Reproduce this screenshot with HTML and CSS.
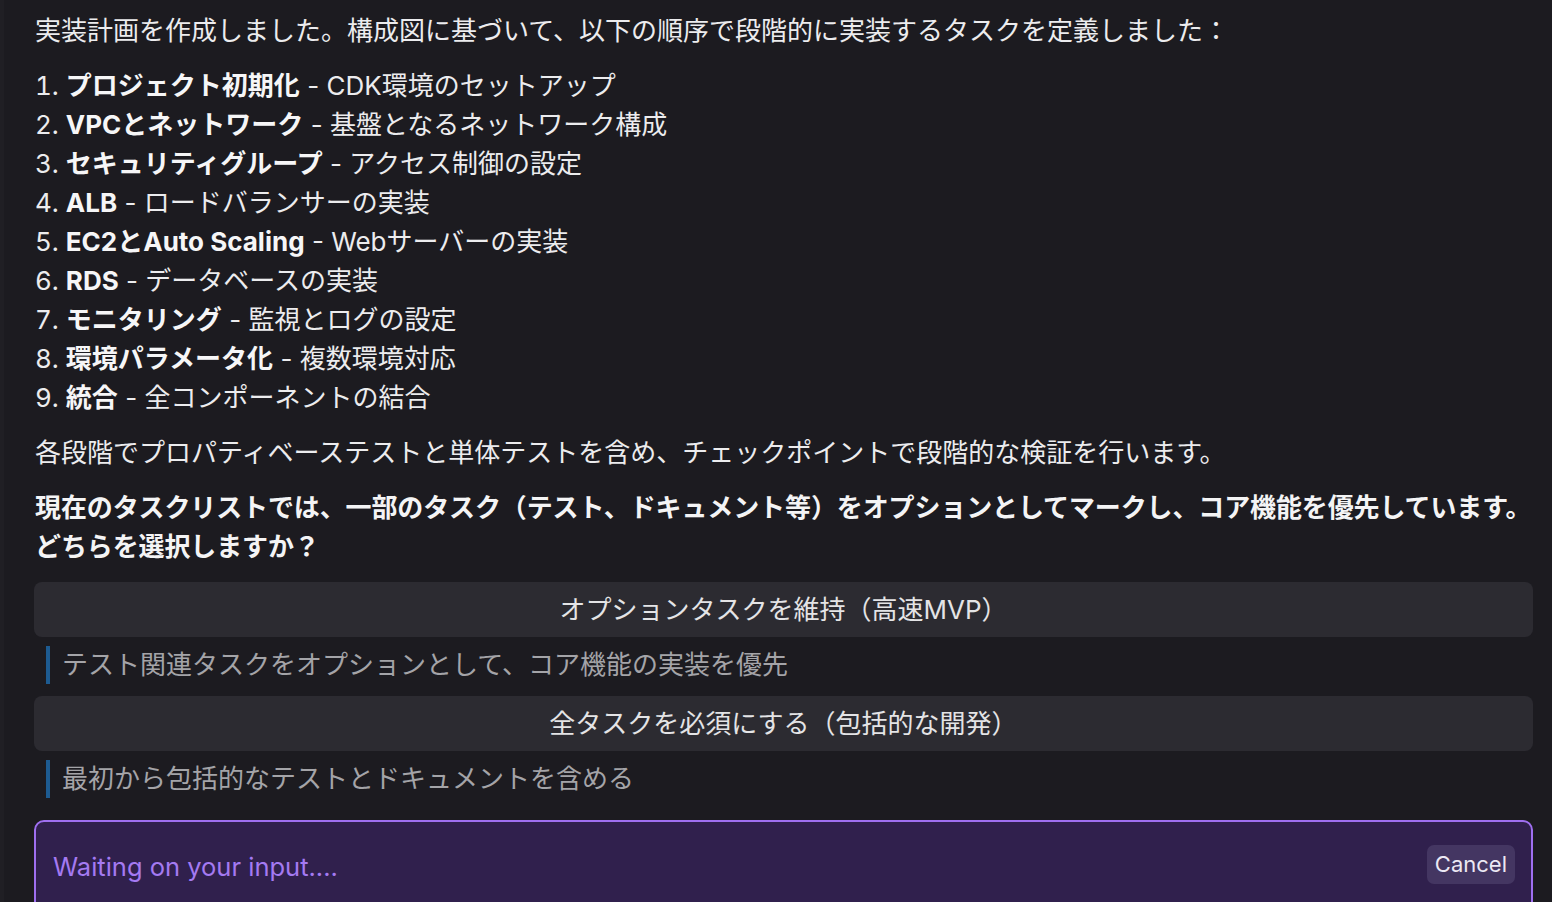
FILE: index.html
```html
<!DOCTYPE html>
<html lang="ja">
<head>
<meta charset="utf-8">
<link rel="stylesheet" href="styles.css">
</head>
<body>
<div class="page">
  <p class="para">実装計画を作成しました。構成図に基づいて、以下の順序で段階的に実装するタスクを定義しました：</p>
  <ol class="steps">
    <li><b>プロジェクト初期化</b> - CDK環境のセットアップ</li>
    <li><b>VPCとネットワーク</b> - 基盤となるネットワーク構成</li>
    <li><b>セキュリティグループ</b> - アクセス制御の設定</li>
    <li><b>ALB</b> - ロードバランサーの実装</li>
    <li><b>EC2とAuto Scaling</b> - Webサーバーの実装</li>
    <li><b>RDS</b> - データベースの実装</li>
    <li><b>モニタリング</b> - 監視とログの設定</li>
    <li><b>環境パラメータ化</b> - 複数環境対応</li>
    <li><b>統合</b> - 全コンポーネントの結合</li>
  </ol>
  <p class="para">各段階でプロパティベーステストと単体テストを含め、チェックポイントで段階的な検証を行います。</p>
  <p class="para question">現在のタスクリストでは、一部のタスク（テスト、ドキュメント等）をオプションとしてマークし、コア機能を優先しています。どちらを選択しますか？</p>
  <div class="options">
    <div class="option">
      <div class="opt-btn">オプションタスクを維持（高速MVP）</div>
      <div class="opt-desc">テスト関連タスクをオプションとして、コア機能の実装を優先</div>
    </div>
    <div class="option">
      <div class="opt-btn">全タスクを必須にする（包括的な開発）</div>
      <div class="opt-desc">最初から包括的なテストとドキュメントを含める</div>
    </div>
  </div>
  <div class="input-box">
    <span class="placeholder">Waiting on your input....</span>
    <span class="cancel">Cancel</span>
  </div>
</div>
</body>
</html>
```

FILE: styles.css
```css
html, body {
  margin: 0;
  padding: 0;
  background: #1c1b20;
  height: 100%;
  overflow: hidden;
}
body {
  border-left: 4px solid #201f24;
  box-sizing: border-box;
}
.page {
  padding: 11px 19px 0 30px;
  font-family: "Inter", "Noto Sans CJK JP", sans-serif;
  font-size: 26px;
  line-height: 39px;
  color: #ececee;
}
.para {
  margin: 0 0 16px 1px;
}
.question {
  font-weight: 700;
  color: #f4f4f5;
  letter-spacing: -0.12px;
}
.steps {
  margin: 0 0 16px 1px;
  padding: 0;
  list-style: decimal inside;
}
.steps li::marker {
  font-weight: 400;
}
.steps b {
  font-weight: 700;
  color: #f6f6f7;
}
.options {
  display: flex;
  flex-direction: column;
  gap: 12px;
}
.option {
  display: flex;
  flex-direction: column;
  gap: 9px;
}
.opt-btn {
  height: 55px;
  background: #2c2b31;
  border-radius: 8px;
  display: flex;
  align-items: center;
  justify-content: center;
  color: #e4e4e6;
}
.opt-desc {
  margin-left: 12px;
  border-left: 4px solid #1d5b91;
  padding-left: 12px;
  line-height: 38px;
  color: #a4a4a8;
}
.input-box {
  margin-top: 22px;
  height: 110px;
  border: 2px solid #9f6ff0;
  border-radius: 10px;
  background: #30204d;
  display: flex;
  align-items: flex-start;
  justify-content: space-between;
  padding: 23px 16px 0 17px;
  box-sizing: border-box;
  font-family: "Inter", "Noto Sans", sans-serif;
}
.placeholder {
  font-size: 25.5px;
  line-height: 44px;
  color: #a47af2;
}
.cancel {
  font-size: 22px;
  line-height: 39px;
  padding: 0 8px;
  background: #443662;
  border-radius: 7px;
  color: #ece8f4;
}
```
